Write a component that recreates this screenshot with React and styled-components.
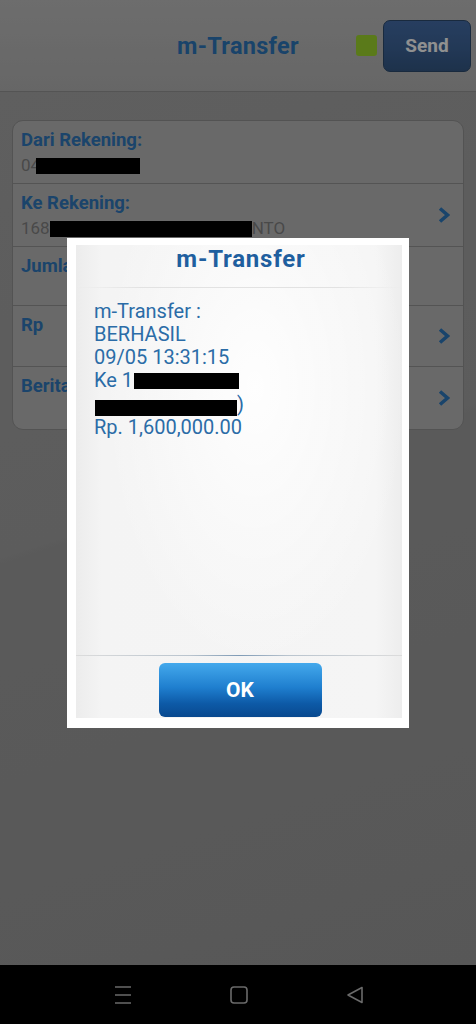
import React from 'react'
import styled, { createGlobalStyle } from 'styled-components'

const Global = createGlobalStyle`
  html, body {
    margin: 0;
    padding: 0;
    background: #000;
  }
  body {
    font-family: Roboto, "Liberation Sans", Arial, sans-serif;
  }
  * {
    box-sizing: border-box;
  }
`

const Phone = styled.div`
  width: 476px;
  height: 1024px;
  display: flex;
  flex-direction: column;
  overflow: hidden;
`

const Screen = styled.div`
  position: relative;
  height: 965px;
  display: flex;
  flex-direction: column;
`

const Header = styled.header`
  height: 92px;
  display: grid;
  grid-template-columns: 1fr auto 1fr;
  align-items: center;
  background: linear-gradient(#b6b6b6, #ababab);
  border-bottom: 1px solid #8c8c8c;
`

const Title = styled.h1`
  grid-column: 2;
  margin: 0;
  font-size: 23.5px;
  font-weight: 700;
  color: #2b71b1;
  letter-spacing: 0.3px;
`

const HeaderRight = styled.div`
  grid-column: 3;
  display: flex;
  justify-content: flex-end;
  align-items: center;
  gap: 6px;
  padding-right: 5px;
`

const StatusDot = styled.span`
  width: 21px;
  height: 21px;
  border-radius: 3px;
  background: #97cc2c;
`

const SendButton = styled.button`
  width: 88px;
  height: 52px;
  border-radius: 7px;
  border: 1px solid #2a4668;
  background: linear-gradient(#4168a0, #3a5f90 55%, #31537d);
  color: #f0f0f0;
  font-family: inherit;
  font-size: 19px;
  font-weight: 700;
  cursor: pointer;
`

const Content = styled.main`
  flex: 1;
  padding: 28px 12px 0;
  background: linear-gradient(162deg, #9e9e9e 0%, #9a9a9a 45%, #979797 46%, #929292 100%);
`

const Card = styled.section`
  border: 1px solid #8a8a8a;
  border-radius: 11px;
  background: #b0b0b0;
  overflow: hidden;
`

const Row = styled.div`
  display: flex;
  align-items: center;
  height: ${p => p.h}px;
  padding: 0 12px 0 8px;
  & + & {
    border-top: 1px solid #8c8c8c;
  }
`

const RowText = styled.div`
  flex: 1;
  align-self: flex-start;
  padding-top: 8px;
`

const Label = styled.div`
  font-size: 18.5px;
  font-weight: 700;
  line-height: 22px;
  color: #2e72b2;
`

const Value = styled.div`
  font-size: 17px;
  line-height: 28px;
  color: #7a7a7a;
  white-space: nowrap;
`

const Redact = styled.span`
  display: inline-block;
  width: ${p => p.w}px;
  height: 16px;
  margin-left: ${p => p.ml || 0}px;
  background: #000;
  vertical-align: ${p => p.va || -3}px;
`

const Chevron = () => (
  <svg width="14" height="18" viewBox="0 0 14 18">
    <path d="M3 2.5 L10.5 9 L3 15.5" fill="none" stroke="#2b72b3" strokeWidth="3.6" />
  </svg>
)

const Overlay = styled.div`
  position: absolute;
  inset: 0;
  background: rgba(0, 0, 0, 0.4);
  display: flex;
  align-items: center;
  justify-content: center;
`

const Dialog = styled.div`
  width: 342px;
  height: 490px;
  padding: 7px 7px 10px 9px;
  background: #fff;
`

const Panel = styled.div`
  height: 100%;
  display: flex;
  flex-direction: column;
  background:
    radial-gradient(ellipse at 55% 30%, rgba(255, 255, 255, 0.9), rgba(255, 255, 255, 0) 60%),
    linear-gradient(90deg, #ececec, #f4f4f4 8%, #f5f5f5 92%, #ededed);
`

const DialogTitle = styled.div`
  height: 43px;
  text-align: center;
  font-size: 24px;
  font-weight: 700;
  line-height: 28px;
  color: #1f5f9f;
  letter-spacing: 0.8px;
  padding-left: 4px;
  border-bottom: 1px solid;
  border-image: linear-gradient(90deg, transparent, #e2e2e2 20%, #e2e2e2 80%, transparent) 1;
`

const Message = styled.div`
  flex: 1;
  padding: 12px 0 0 18px;
  font-size: 20px;
  line-height: 23.3px;
  color: #2b6ca7;
`

const Line = styled.div`
  white-space: nowrap;
`

const Footer = styled.div`
  height: 63px;
  display: flex;
  justify-content: center;
  padding-top: 7px;
  padding-left: 2px;
  border-top: 1px solid;
  border-image: linear-gradient(90deg, #dcdcdc, #b9c4ce 35%, #7f9bb6 50%, #b9c4ce 65%, #dcdcdc) 1;
`

const OkButton = styled.button`
  width: 163px;
  height: 54px;
  border: none;
  border-radius: 6px;
  background: linear-gradient(#44a9ec, #1f7fcf 45%, #0d5aa7 75%, #08498f);
  color: #fff;
  font-family: inherit;
  font-size: 21px;
  font-weight: 700;
  cursor: pointer;
`

const NavBar = styled.nav`
  flex: 1;
  background: #000;
  display: flex;
  justify-content: center;
  align-items: center;
  gap: 98px;
  padding-left: 1px;
`

const NavIcon = styled.svg`
  width: 18px;
  height: 18px;
  fill: none;
  stroke: #6a6a6a;
  stroke-width: 1.6;
`

const rows = [
  { label: 'Dari Rekening:', h: 62, value: <>04<Redact w={104} ml={-4} /></> },
  { label: 'Ke Rekening:', h: 63, chevron: true, value: <>168<Redact w={202} />NTO</> },
  { label: 'Jumlah:', h: 59 },
  { label: 'Rp', h: 61, chevron: true },
  { label: 'Berita:', h: 63, chevron: true },
]

const App = () => (
  <Phone>
    <Global />
    <Screen>
      <Header>
        <Title>m-Transfer</Title>
        <HeaderRight>
          <StatusDot />
          <SendButton>Send</SendButton>
        </HeaderRight>
      </Header>
      <Content>
        <Card>
          {rows.map(r => (
            <Row key={r.label} h={r.h}>
              <RowText>
                <Label>{r.label}</Label>
                {r.value && <Value>{r.value}</Value>}
              </RowText>
              {r.chevron && <Chevron />}
            </Row>
          ))}
        </Card>
      </Content>
      <Overlay>
        <Dialog>
          <Panel>
            <DialogTitle>m-Transfer</DialogTitle>
            <Message>
              <Line>m-Transfer :</Line>
              <Line>BERHASIL</Line>
              <Line>09/05 13:31:15</Line>
              <Line>Ke 1<Redact w={105} ml={1} va={-2} /></Line>
              <Line><Redact w={142} ml={1} va={-5} />)</Line>
              <Line>Rp. 1,600,000.00</Line>
            </Message>
            <Footer>
              <OkButton>OK</OkButton>
            </Footer>
          </Panel>
        </Dialog>
      </Overlay>
    </Screen>
    <NavBar>
      <NavIcon viewBox="0 0 18 18">
        <path d="M1 1h16M1 9h16M1 17h16" />
      </NavIcon>
      <NavIcon viewBox="0 0 18 18">
        <rect x="1" y="1" width="16" height="16" rx="3" />
      </NavIcon>
      <NavIcon viewBox="0 0 18 18">
        <path d="M2 9 L16 1.5 V16.5 Z" strokeLinejoin="round" />
      </NavIcon>
    </NavBar>
  </Phone>
)

export default App
